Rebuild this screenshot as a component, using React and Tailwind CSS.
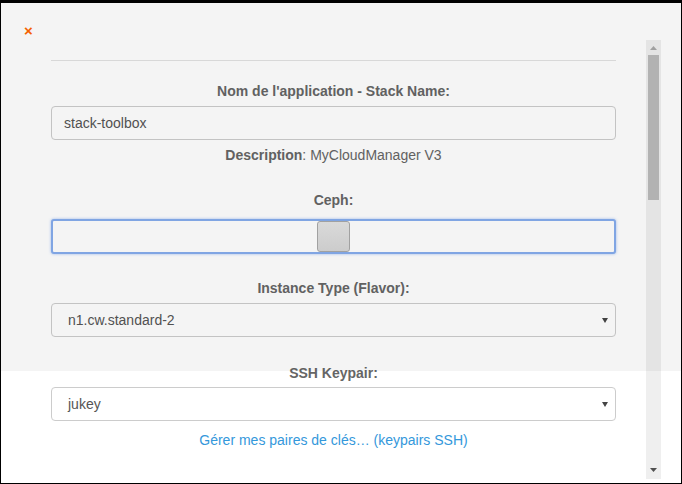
import React from 'react'

const labelCls = 'text-center text-[14px] leading-[20px] font-bold text-[#666]'

function Caret({ color = '#444' }) {
  return (
    <svg width="6" height="5" viewBox="0 0 6 5" className="shrink-0">
      <path d="M0 0h6L3 5z" fill={color} />
    </svg>
  )
}

function Select({ value }) {
  return (
    <div className="h-[34px] rounded-[4px] border border-[#ccc] bg-white flex items-center justify-between pl-[16px] pr-[7px]">
      <span className="text-[14px] text-[#555]">{value}</span>
      <Caret />
    </div>
  )
}

function Scrollbar() {
  return (
    <div className="mt-[37px] w-[15px] h-[439px] bg-[#efefef] flex flex-col items-center">
      <div className="h-[15px] flex items-center justify-center pt-[1px]">
        <svg width="7" height="4" viewBox="0 0 7 4"><path d="M3.5 0L7 4H0z" fill="#a8a8a8" /></svg>
      </div>
      <div className="w-[11px] h-[145px] bg-[#bbb]" />
      <div className="flex-1" />
      <div className="h-[15px] flex items-center justify-center pb-[3px]">
        <svg width="7" height="4" viewBox="0 0 7 4"><path d="M0 0h7L3.5 4z" fill="#505050" /></svg>
      </div>
    </div>
  )
}

export default function App() {
  return (
    <div className="relative w-[682px] h-[484px] overflow-hidden bg-white border-t-[3px] border-l border-r border-b border-black font-['Liberation_Sans',Arial,sans-serif]">
      <div className="flex">
        <div className="w-[645px] shrink-0">
          <div className="pt-[16px] pl-[23px] h-[36px]">
            <span className="text-[#ff6600] text-[15px] leading-[20px] font-bold">×</span>
          </div>
          <div className="pl-[50px] w-[615px]">
            <div className="mt-[21px] border-t border-[#e2e2e2]" />
            <div className={`mt-[20px] ${labelCls}`}>Nom de l'application - Stack Name:</div>
            <div className="mt-[5px] h-[34px] rounded-[4px] border border-[#ccc] bg-white flex items-center pl-[12px]">
              <span className="text-[14px] text-[#555]">stack-toolbox</span>
            </div>
            <div className="mt-[5px] text-center text-[14px] leading-[20px] text-[#666]">
              <span className="font-bold">Description</span>: MyCloudManager V3
            </div>
            <div className={`mt-[25px] ${labelCls}`}>Ceph:</div>
            <div className="mt-[9px] h-[35px] rounded-[3px] border-2 border-[#86adee] bg-white flex items-center justify-center shadow-[0_0_3px_rgba(102,153,238,0.6)]">
              <div className="w-[33px] h-[31px] rounded-[3px] border border-[#a9a9a9] bg-gradient-to-b from-[#e4e4e4] to-[#d6d6d6]" />
            </div>
            <div className={`mt-[24px] ${labelCls}`}>Instance Type (Flavor):</div>
            <div className="mt-[5px]"><Select value="n1.cw.standard-2" /></div>
            <div className={`mt-[26px] ${labelCls}`}>SSH Keypair:</div>
            <div className="mt-[4px]"><Select value="jukey" /></div>
            <div className="mt-[9px] text-center text-[14px] leading-[20px] text-[#3498db]">
              Gérer mes paires de clés… (keypairs SSH)
            </div>
          </div>
        </div>
        <Scrollbar />
      </div>
      {/* modal backdrop shading over the upper part */}
      <div className="pointer-events-none absolute left-0 right-0 top-0 h-[368px] bg-black/[0.045]" />
    </div>
  )
}
